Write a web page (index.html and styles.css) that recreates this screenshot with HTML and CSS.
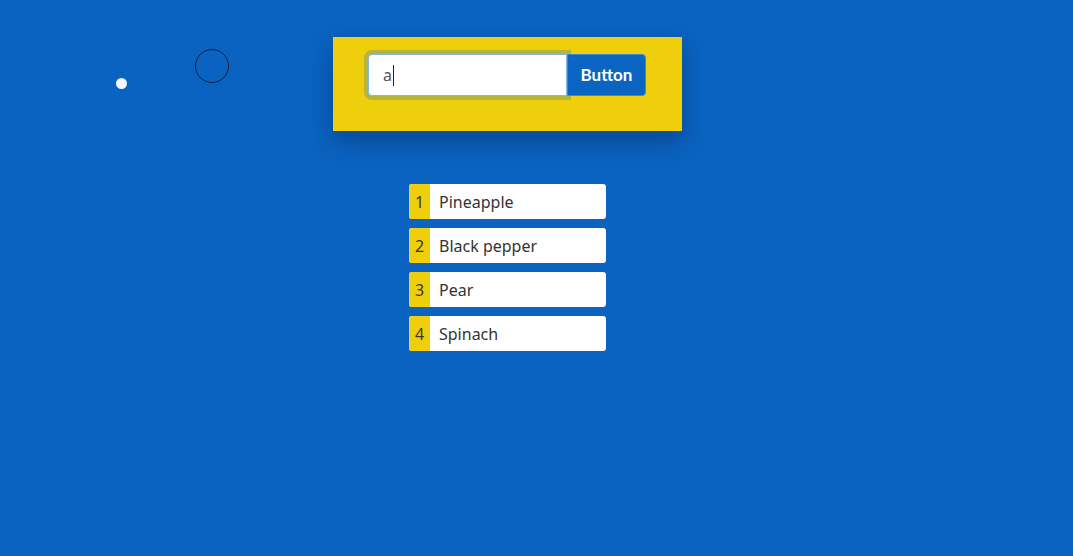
FILE: index.html
```html
<!DOCTYPE html>
<html>
<head>
<meta charset="utf-8">
<link rel="stylesheet" href="styles.css">
</head>
<body>
<div class="dot"></div>
<div class="ring"></div>
<div class="panel">
  <div class="search">
    <div class="field"><span class="value">a</span><span class="caret"></span></div>
    <button class="btn">Button</button>
  </div>
</div>
<ol class="list">
  <li class="item"><span class="num">1</span><span class="label">Pineapple</span></li>
  <li class="item"><span class="num">2</span><span class="label">Black pepper</span></li>
  <li class="item"><span class="num">3</span><span class="label">Pear</span></li>
  <li class="item"><span class="num">4</span><span class="label">Spinach</span></li>
</ol>
</body>
</html>
```
FILE: styles.css
```css
html, body {
  margin: 0;
  padding: 0;
}
body {
  background: #0a63c0;
  width: 1073px;
  height: 556px;
  overflow: hidden;
  position: relative;
  font-family: "Noto Sans", "Open Sans", sans-serif;
  display: flow-root;
}
.dot {
  position: absolute;
  left: 116px;
  top: 78px;
  width: 11px;
  height: 11px;
  border-radius: 50%;
  background: #f4f6fb;
}
.ring {
  position: absolute;
  left: 195px;
  top: 49px;
  width: 32px;
  height: 32px;
  border-radius: 50%;
  border: 1px solid #0b1e3a;
}
.panel {
  margin: 37px 0 0 333px;
  width: 349px;
  height: 94px;
  box-sizing: border-box;
  padding: 17px 0 0 35px;
  background: #efcf0b;
  box-shadow: 0 10px 22px rgba(0, 20, 60, 0.35);
}
.search {
  display: flex;
  height: 42px;
}
.field {
  width: 199px;
  box-sizing: border-box;
  border: 1px solid #86b6e6;
  border-radius: 4px 0 0 4px;
  background: #fff;
  box-shadow: 0 0 0 4px rgba(40, 110, 190, 0.28);
  display: flex;
  align-items: center;
  padding-left: 14px;
  font-size: 16px;
  color: #555;
}
.caret {
  display: inline-block;
  width: 1px;
  height: 21px;
  background: #222;
  margin-left: 1px;
}
.btn {
  width: 79px;
  height: 42px;
  box-sizing: border-box;
  border: 1px solid #3b87d8;
  border-radius: 0 4px 4px 0;
  background: #0a64c2;
  color: #fff;
  font-family: Lato, "Noto Sans", sans-serif;
  font-weight: 700;
  font-size: 17px;
  padding: 0 0 2px 0;
}
.list {
  list-style: none;
  margin: 53px 0 0 409px;
  padding: 0;
  width: 197px;
  display: flex;
  flex-direction: column;
  gap: 9px;
}
.item {
  height: 35px;
  display: flex;
  align-items: center;
  background: #fff;
  border-radius: 3px;
  overflow: hidden;
  font-size: 16px;
  color: #333;
}
.num {
  width: 21px;
  height: 100%;
  background: #efcf0b;
  display: flex;
  align-items: center;
  justify-content: center;
  color: #3a3820;
  font-size: 16px;
}
.label {
  padding-left: 9px;
}
```
